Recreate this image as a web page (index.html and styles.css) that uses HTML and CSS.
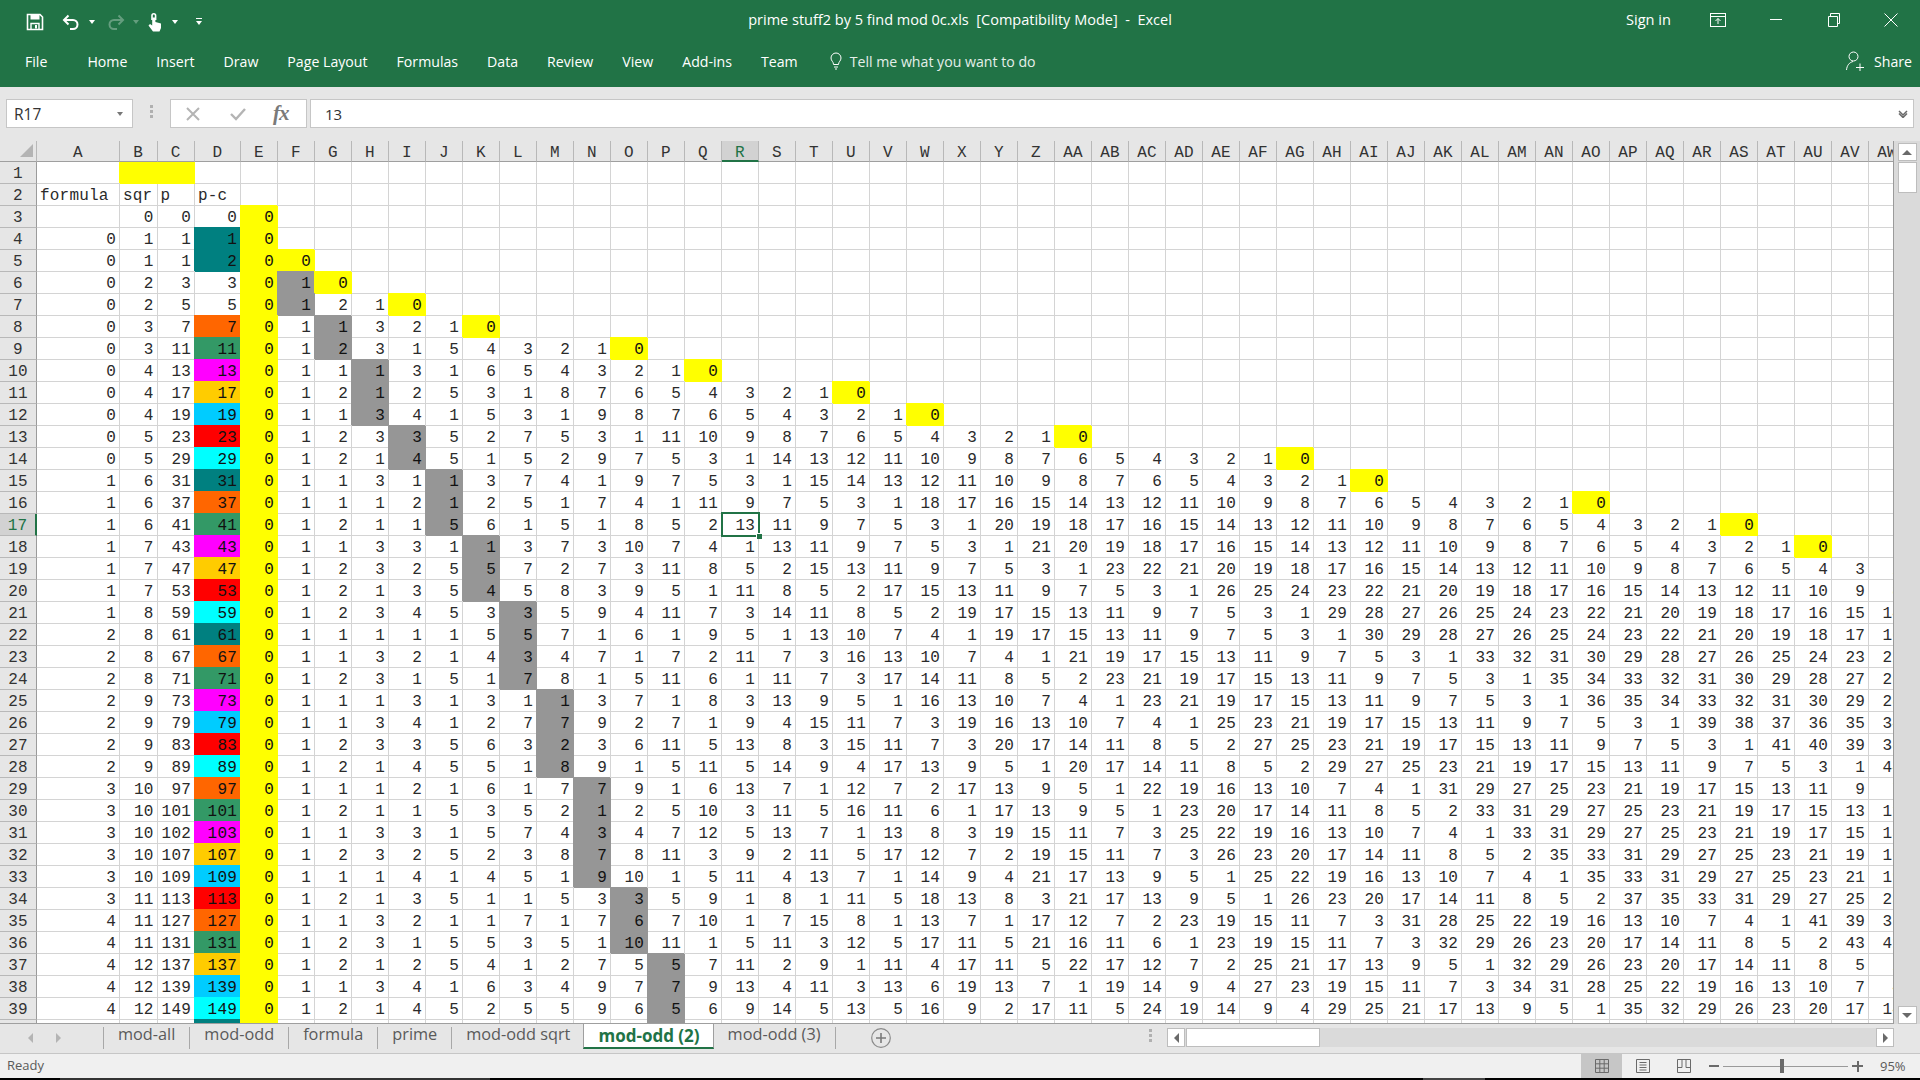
FILE: index.html
```html
<!doctype html>
<html lang="en">
<head>
    <meta charset="utf-8">
    <title>prime stuff2 by 5 find mod 0c.xls - Excel</title>
    <link rel="stylesheet" href="styles.css">
</head>
<body>
    <div class="titlebar">
        <div class="qat">
            <svg class="ico save" width="18" height="18" viewBox="0 0 18 18"><path d="M1.5 1.5H14L16.5 4V16.5H1.5Z" fill="none" stroke="#fff" stroke-width="1.6"/><rect x="4.5" y="1.5" width="9" height="5" fill="#fff"/><path d="M5 16.5V10.5H13V16.5" fill="none" stroke="#fff" stroke-width="1.4"/><rect x="9" y="12" width="2" height="3.5" fill="#fff"/></svg>
            <svg class="ico undo" width="18" height="18" viewBox="0 0 18 18"><path d="M6.5 2.5L2 7L6.5 11.5M2.5 7H11A4.5 4.5 0 0 1 11 16H8" fill="none" stroke="#fff" stroke-width="2"/></svg>
            <span class="caret"></span>
            <svg class="ico redo" width="18" height="18" viewBox="0 0 18 18"><path d="M11.5 2.5L16 7L11.5 11.5M15.5 7H7A4.5 4.5 0 0 0 7 16H10" fill="none" stroke="#fff" stroke-width="2"/></svg>
            <span class="caret dim"></span>
            <svg class="ico touch" width="16" height="20" viewBox="0 0 16 20"><path d="M5 8V3.5a1.8 1.8 0 0 1 3.6 0V8" fill="none" stroke="#fff" stroke-width="1.6"/><path d="M5.2 9V5.5H8.4V10L14 11.5V16L12.5 19.5H6L1.5 13.5L3 12L5.2 13.5Z" fill="#fff"/></svg>
            <span class="caret"></span>
            <span class="customize"><i></i><b></b></span>
        </div>
        <div class="doc-title">prime stuff2 by 5 find mod 0c.xls  [Compatibility Mode]  -  Excel</div>
        <div class="winctl">
            <span class="signin">Sign in</span>
            <svg class="ctl-display" width="16" height="14" viewBox="0 0 16 14"><rect x=".5" y=".5" width="15" height="13" fill="none" stroke="#fff"/><path d="M.5 3.5H15.5M8 11V5.5M5.5 8L8 5.5L10.5 8" fill="none" stroke="#fff"/></svg>
            <svg class="ctl-min" width="12" height="12" viewBox="0 0 12 12"><path d="M0 5.5H12" stroke="#fff"/></svg>
            <svg class="ctl-max" width="12" height="14" viewBox="0 0 12 14"><path d="M.5 3.5H9.5V13.5H.5ZM2.5 3.5V.5H11.5V10.5H9.5" fill="none" stroke="#fff"/></svg>
            <svg class="ctl-close" width="14" height="14" viewBox="0 0 14 14"><path d="M.5.5L13.5 13.5M13.5.5L.5 13.5" stroke="#fff"/></svg>
        </div>
    </div>

    <div class="ribbon">
        <span class="rtab rtab-file">File</span>
        <span class="rtab">Home</span>
        <span class="rtab">Insert</span>
        <span class="rtab">Draw</span>
        <span class="rtab">Page Layout</span>
        <span class="rtab">Formulas</span>
        <span class="rtab">Data</span>
        <span class="rtab">Review</span>
        <span class="rtab">View</span>
        <span class="rtab">Add-ins</span>
        <span class="rtab">Team</span>
        <span class="tellme">
            <svg width="12" height="18" viewBox="0 0 12 18"><path d="M3.5 12.5C3.5 9.5 1 9 1 6a5 5 0 0 1 10 0C11 9 8.500 9.500 8.500 12.500ZM4 15H8M5 17H7" fill="none" stroke="#fff"/></svg>
            Tell me what you want to do
        </span>
        <span class="share">
            <svg width="18" height="20" viewBox="0 0 18 20"><circle cx="7.500" cy="5.500" r="4.500" fill="none" stroke="#fff"/><path d="M.5 19C1 14 3.500 11.500 7 10.500M10 16.500H18M14 12.500V20" fill="none" stroke="#fff"/></svg>
            Share
        </span>
    </div>

    <div class="formulabar">
        <div class="namebox"><span>R17</span><i class="tri-down"></i></div>
        <div class="grip"><i></i><i></i><i></i></div>
        <div class="fbuttons">
            <svg width="14" height="14" viewBox="0 0 14 14"><path d="M1 1L13 13M13 1L1 13" stroke="#b4b4b4" stroke-width="2"/></svg>
            <svg width="16" height="14" viewBox="0 0 16 14"><path d="M1 7L6 12L15 2" fill="none" stroke="#b4b4b4" stroke-width="2.400"/></svg>
            <span class="fx">fx</span>
        </div>
        <div class="finput">
            <span>13</span>
            <svg width="10" height="8" viewBox="0 0 10 8"><path d="M1 1L5 5L9 1M1 3.500L5 7.500L9 3.500" fill="none" stroke="#6a6a6a" stroke-width="1.500"/></svg>
        </div>
    </div>

    <div class="sheet">
        <div class="gridclip"><div class="grid" id="grid"></div></div>
        <div class="vscroll">
            <div class="sbtn"><i class="tri-up"></i></div>
            <div class="vthumb"></div>
            <div class="sfill"></div>
            <div class="sbtn"><i class="tri-down"></i></div>
        </div>
    </div>

    <div class="tabsbar">
        <div class="tabnav"><i class="tri-left"></i><i class="tri-right"></i></div>
        <div class="stab">mod-all</div>
        <div class="stab">mod-odd</div>
        <div class="stab">formula</div>
        <div class="stab">prime</div>
        <div class="stab before-active">mod-odd sqrt</div>
        <div class="stab active">mod-odd (2)</div>
        <div class="stab">mod-odd (3)</div>
        <svg class="addsheet" width="20" height="20" viewBox="0 0 20 20"><circle cx="10" cy="10" r="9.300" fill="none" stroke="#8a8a8a" stroke-width="1.200"/><path d="M10 5V15M5 10H15" stroke="#7a7a7a" stroke-width="1.600"/></svg>
        <div class="grip grip-tabs"><i></i><i></i><i></i></div>
        <div class="hscroll">
            <div class="sbtn"><i class="tri-left"></i></div>
            <div class="hthumb"></div>
            <div class="sfill"></div>
            <div class="sbtn"><i class="tri-right"></i></div>
        </div>
    </div>

    <div class="status">
        <span class="ready">Ready</span>
        <div class="views">
            <span class="view on"><svg width="14" height="14" viewBox="0 0 14 14"><path d="M.5.5H13.500V13.500H.5ZM.5 4.800H13.500M.5 9.200H13.500M4.800.5V13.500M9.200.5V13.500" fill="none" stroke="#6a6a6a"/></svg></span>
            <span class="view"><svg width="14" height="14" viewBox="0 0 14 14"><path d="M.5.5H13.500V13.500H.5ZM3.500 3.500H10.500M3.500 6H10.500M3.500 8.500H10.500M3.500 11H10.500" fill="none" stroke="#6a6a6a"/></svg></span>
            <span class="view"><svg width="14" height="14" viewBox="0 0 14 14"><path d="M.5.5H13.500V13.500H.5ZM.5 8.500H5V.5M9 .5V8.500H13.500" fill="none" stroke="#6a6a6a"/></svg></span>
        </div>
        <div class="zoom">
            <i class="zminus"></i>
            <div class="ztrack"><i class="zthumb"></i></div>
            <i class="zplus"></i>
            <span class="zpct">95%</span>
        </div>
    </div>
    <div class="strip"></div>

    <script src="sheet.js"></script>
</body>
</html>
```
FILE: styles.css
```css
html, body {
    margin: 0;
    padding: 0;
}
body {
    width: 1920px;
    height: 1080px;
    overflow: hidden;
    display: flex;
    flex-direction: column;
    font-family: "Open Sans", "Noto Sans", sans-serif;
    background: #e6e6e6;
}

/* title bar */
.titlebar {
    height: 43px;
    background: #217346;
    color: #fff;
    display: grid;
    grid-template-columns: 1fr auto 1fr;
    align-items: center;
    flex: none;
}
.qat {
    display: flex;
    align-items: center;
    padding-left: 26px;
}
.ico {
    flex: none;
}
.undo {
    margin-left: 18px;
}
.redo {
    margin-left: 12px;
    opacity: .3;
}
.touch {
    margin-left: 8px;
}
.caret {
    width: 0;
    height: 0;
    margin-left: 9px;
    border: 3px solid transparent;
    border-top: 4px solid #fff;
    border-bottom: 0;
}
.caret.dim {
    margin-left: 8px;
    opacity: .3;
}
.customize {
    display: flex;
    flex-direction: column;
    align-items: center;
    gap: 2px;
    margin-left: 18px;
}
.customize i {
    width: 6px;
    height: 1px;
    background: #fff;
}
.customize b {
    width: 0;
    height: 0;
    border: 3px solid transparent;
    border-top: 4px solid #fff;
    border-bottom: 0;
}
.doc-title {
    font-size: 14.500px;
    white-space: pre;
    margin-top: -4px;
}
.winctl {
    display: flex;
    align-items: center;
    justify-content: flex-end;
    margin-top: -4px;
}
.signin {
    font-size: 14.600px;
    margin: -2px 39px 0 0;
}
.ctl-max {
    margin-left: 46px;
}
.ctl-close {
    margin: 0 22px 0 44px;
}
.ctl-min {
    margin-left: 44px;
}

/* ribbon tabs */
.ribbon {
    height: 44px;
    background: #217346;
    color: #fff;
    display: flex;
    align-items: center;
    gap: 29px;
    padding: 0 8px 8px 25px;
    box-sizing: border-box;
    font-size: 14.150px;
    flex: none;
}
.rtab-file {
    margin-right: 11px;
}
.tellme {
    display: flex;
    align-items: center;
    gap: 8px;
    color: #e4efe9;
    margin-left: 3px;
}
.share {
    display: flex;
    align-items: center;
    gap: 10px;
    margin-left: auto;
}

/* formula bar */
.formulabar {
    height: 54px;
    display: flex;
    align-items: flex-start;
    padding: 12px 6px 0;
    box-sizing: border-box;
    flex: none;
}
.namebox, .fbuttons, .finput {
    height: 29px;
    background: #fff;
    border: 1px solid #c6c6c6;
    box-sizing: border-box;
    display: flex;
    align-items: center;
    font-size: 15px;
    color: #333;
}
.namebox {
    width: 127px;
    padding: 0 9px 0 7px;
    justify-content: space-between;
    font-size: 15.500px;
}
.grip {
    display: flex;
    flex-direction: column;
    gap: 2px;
    width: 3px;
    margin: 6px 17px 0 17px;
}
.grip i {
    width: 3px;
    height: 3px;
    background: #b0b0b0;
}
.fbuttons {
    width: 137px;
    padding-left: 15px;
    gap: 30px;
}
.fx {
    font-family: "Liberation Serif", serif;
    font-style: italic;
    font-size: 21px;
    font-weight: bold;
    color: #7a7a7a;
    margin-left: -3px;
    letter-spacing: -1px;
}
.finput {
    flex: 1;
    margin-left: 3px;
    padding: 0 5px 0 14px;
    justify-content: space-between;
}

/* sheet */
.sheet {
    height: 883px;
    display: flex;
    flex: none;
    background: #fff;
}
.gridclip {
    width: 1894px;
    height: 883px;
    overflow: hidden;
    box-sizing: border-box;
    border-right: 1px solid #9b9b9b;
    border-bottom: 1px solid #9f9f9f;
    background: #fff;
}
.grid {
    display: grid;
    grid-template-columns: 37px 83px 37.5px 37.5px 46px repeat(45, 37px);
    grid-template-rows: 21px;
    grid-auto-rows: 22px;
    font-family: "Liberation Mono", "Courier New", monospace;
    font-size: 16px;
    letter-spacing: .200px;
    line-height: 24px;
    color: #2a2a2a;
    width: max-content;
}
.cell {
    box-sizing: border-box;
    border-right: 1px solid #d4d4d4;
    border-bottom: 1px solid #d4d4d4;
    padding: 0 3px;
    text-align: right;
    overflow: hidden;
    white-space: pre;
}
.text {
    text-align: left;
}
.hd {
    position: relative;
    z-index: 1;
    background: #e6e6e6;
    text-align: center;
    padding: 0;
    color: #333;
    border-right-color: #b8b8b8;
    border-bottom-color: #b8b8b8;
}
.colhd {
    border-bottom-color: #9f9f9f;
    line-height: 25px;
}
.rowhd {
    border-right-color: #9b9b9b;
}
.hd.sel {
    background: #d2d2d2;
    color: #217346;
}
.colhd.sel {
    border-bottom: 2px solid #217346;
}
.rowhd.sel {
    border-right: 2px solid #217346;
}
.corner {
    background: #e6e6e6;
    border-right: 1px solid #b8b8b8;
    border-bottom: 1px solid #9f9f9f;
    padding: 0;
    position: relative;
}
.corner::after {
    content: "";
    position: absolute;
    right: 3px;
    bottom: 4px;
    width: 0;
    height: 0;
    border-left: 13px solid transparent;
    border-bottom: 13px solid #b4b4b4;
}
.fill {
    border-color: transparent;
    background: var(--fill);
    box-shadow: -1px -1px 0 var(--fill);
    color: #111;
}
.yellow { --fill: #ffff00; }
.grey { --fill: #969696; }
.teal { --fill: #008080; }
.orange { --fill: #ff6600; }
.green { --fill: #339966; }
.magenta { --fill: #ff00ff; }
.gold { --fill: #ffcc00; }
.sky { --fill: #00ccff; }
.red { --fill: #ff0000; }
.cyan { --fill: #00ffff; }
.current {
    position: relative;
    overflow: visible;
}
.current::before {
    content: "";
    position: absolute;
    top: -2px;
    left: -1px;
    right: -2px;
    bottom: -2px;
    border: 2px solid #217346;
}
.current::after {
    content: "";
    position: absolute;
    right: -4px;
    bottom: -4px;
    width: 5px;
    height: 5px;
    background: #217346;
    border: 1px solid #fff;
    border-width: 1px 0 0 1px;
}

/* scrollbars */
.vscroll {
    width: 26px;
    background: #dadada;
    display: flex;
    flex-direction: column;
    align-items: center;
    padding: 2px 0 0 0;
    box-sizing: border-box;
}
.vscroll .sbtn {
    height: 18px;
    width: 19px;
}
.sbtn {
    background: #fff;
    border: 1px solid #bdbdbd;
    box-sizing: border-box;
    display: flex;
    align-items: center;
    justify-content: center;
    flex: none;
}
.vthumb {
    width: 19px;
    height: 31px;
    background: #fff;
    border: 1px solid #bdbdbd;
    box-sizing: border-box;
    margin-top: 1px;
}
.sfill {
    flex: 1;
}
.tri-up, .tri-down {
    width: 0;
    height: 0;
    border-left: 5px solid transparent;
    border-right: 5px solid transparent;
}
.tri-up {
    border-bottom: 5px solid #6a6a6a;
}
.tri-down {
    border-top: 5px solid #6a6a6a;
}
.namebox .tri-down {
    border-width: 4px 3.500px 0;
    border-top-color: #777;
}
.tri-left, .tri-right {
    width: 0;
    height: 0;
    border-top: 5px solid transparent;
    border-bottom: 5px solid transparent;
}
.tri-left {
    border-right: 5px solid #6a6a6a;
}
.tri-right {
    border-left: 5px solid #6a6a6a;
}

/* sheet tabs */
.tabsbar {
    height: 29px;
    display: flex;
    align-items: flex-start;
    box-sizing: border-box;
    background: #e6e6e6;
    flex: none;
}
.tabnav {
    width: 104px;
    height: 22px;
    margin-top: 3px;
    box-sizing: border-box;
    padding-left: 28px;
    display: flex;
    align-items: center;
    gap: 23px;
    border-right: 1px solid #a8a8a8;
    flex: none;
}
.tabnav i {
    border-left-color: #b4b4b4;
    border-right-color: #b4b4b4;
}
.stab {
    height: 22px;
    margin-top: 3px;
    padding: 0 14px;
    font-size: 16.300px;
    line-height: 15px;
    color: #5a5a5a;
    border-right: 1px solid #a8a8a8;
    box-sizing: border-box;
}
.stab.before-active {
    border-right: 0;
    padding-right: 13px;
}
.stab.active {
    position: relative;
    height: 26px;
    margin-top: -1px;
    padding: 4px 13px 0 14px;
    background: #fff;
    color: #217346;
    font-weight: 700;
    font-size: 17px;
    border: 1px solid #9f9f9f;
    border-top-color: #9f9f9f;
    border-bottom: 2px solid #217346;
}
.addsheet {
    margin: 4px 0 0 35px;
    flex: none;
}
.grip-tabs {
    margin: 5px 15px 0 auto;
}
.hscroll {
    width: 727px;
    height: 19px;
    margin: 4px 26px 0 0;
    background: #dadada;
    display: flex;
    flex: none;
}
.hscroll .sbtn {
    width: 18px;
}
.hthumb {
    width: 134px;
    background: #fff;
    border: 1px solid #bdbdbd;
    box-sizing: border-box;
    margin-left: 1px;
}

/* status bar */
.status {
    height: 25px;
    background: #f0f0f0;
    border-top: 1px solid #c6c6c6;
    box-sizing: border-box;
    display: flex;
    align-items: center;
    font-size: 13px;
    color: #5a5a5a;
    flex: none;
}
.ready {
    margin: -2px 0 0 7px;
}
.views {
    display: flex;
    align-items: stretch;
    height: 100%;
    margin-left: auto;
}
.view {
    width: 41px;
    display: flex;
    align-items: center;
    justify-content: center;
}
.view.on {
    background: #c6c6c6;
}
.zoom {
    display: flex;
    align-items: center;
    margin-left: 5px;
    width: 211px;
    flex: none;
}
.zminus {
    width: 10px;
    height: 2px;
    background: #6a6a6a;
}
.ztrack {
    position: relative;
    width: 125px;
    height: 1px;
    background: #9a9a9a;
    margin-left: 4px;
}
.zthumb {
    position: absolute;
    left: 57px;
    top: -7px;
    width: 4px;
    height: 14px;
    background: #6a6a6a;
}
.zplus {
    position: relative;
    width: 11px;
    height: 2px;
    background: #6a6a6a;
    margin-left: 4px;
}
.zplus::after {
    content: "";
    position: absolute;
    left: 4.500px;
    top: -4.500px;
    width: 2px;
    height: 11px;
    background: #6a6a6a;
}
.zpct {
    margin-left: 17px;
}
.strip {
    height: 2px;
    flex: none;
    background: linear-gradient(to right, #000 60px, #333 60px, #333 490px, #000 490px, #000 1423px, #444 1423px, #444 1485px, #000 1485px);
}
```
FILE: sheet.js
```js
// builds the worksheet: every cell from column E on is p mod k
var primes = [0, 1, 2, 3, 5, 7, 11, 13, 17, 19, 23, 29, 31, 37, 41, 43, 47, 53, 59, 61, 67, 71, 73, 79, 83, 89,
    97, 101, 103, 107, 109, 113, 127, 131, 137, 139, 149, 151];
var residueFill = { 1: "teal", 7: "orange", 11: "green", 13: "magenta", 17: "gold", 19: "sky", 23: "red", 29: "cyan" };
var COLS = 49;
var SEL_COL = 18, SEL_ROW = 17;
var grid = document.getElementById("grid");

function colName(n) {
    var name = "";
    while (n > 0) {
        name = String.fromCharCode(65 + (n - 1) % 26) + name;
        n = Math.floor((n - 1) / 26);
    }
    return name;
}

function addCell(cls, text) {
    var el = document.createElement("div");
    el.className = "cell " + cls;
    if (text !== "" && text !== undefined) {
        el.textContent = text;
    }
    grid.appendChild(el);
    return el;
}

function dFill(p) {
    if (p == 2) return "fill teal";
    return residueFill[p % 30] ? "fill " + residueFill[p % 30] : "";
}

// header row
addCell("corner");
for (var c = 1; c <= COLS; c++) {
    addCell("hd colhd" + (c == SEL_COL ? " sel" : ""), colName(c));
}

// rows 1 and 2 hold the labels
addCell("hd rowhd", 1);
for (c = 1; c <= COLS; c++) {
    addCell(c == 2 || c == 3 ? "fill yellow" : "");
}
addCell("hd rowhd", 2);
var labels = ["formula", "sqr", "p", "p-c"];
for (c = 1; c <= COLS; c++) {
    addCell("text", labels[c - 1] || "");
}

// data rows
for (var i = 0; i < primes.length; i++) {
    var row = i + 3;
    var p = primes[i];
    var sqr = Math.round(Math.sqrt(p));
    var shown = p;
    if (row == 5) shown = 1;
    if (row == 31) shown = 102;

    addCell("hd rowhd" + (row == SEL_ROW ? " sel" : ""), row == 40 ? "" : row);
    addCell("", p == 0 ? "" : Math.floor(p / 30));
    addCell("", sqr);
    addCell("", shown);
    addCell(dFill(p), p);

    for (var k = 1; k <= COLS - 4; k++) {
        var cls = "";
        var val = "";
        if (k <= p || k == 1) {
            val = p % k;
            if (k == 1 || k == p) {
                cls = "fill yellow";
            } else if (k == sqr) {
                cls = "fill grey";
            }
        }
        if (row == SEL_ROW && k + 4 == SEL_COL) {
            cls = "current";
        }
        addCell(cls, val);
    }
}
```
